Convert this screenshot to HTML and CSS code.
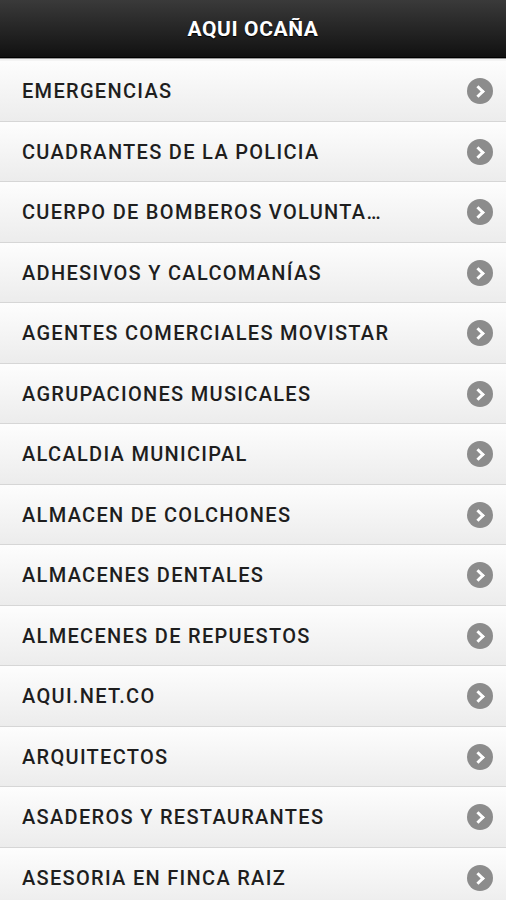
FILE: index.html
```html
<!DOCTYPE html>
<html lang="es">
<head>
  <meta charset="UTF-8" />
  <title>Aqui Ocaña</title>
  <link rel="stylesheet" href="styles.css">
</head>
<body>
  <header class="topbar">
    <h1>AQUI OCAÑA</h1>
  </header>

  <ul class="list">
    <li><a href="#"><span class="label">EMERGENCIAS</span><span class="arrow"></span></a></li>
    <li><a href="#"><span class="label">CUADRANTES DE LA POLICIA</span><span class="arrow"></span></a></li>
    <li><a href="#"><span class="label">CUERPO DE BOMBEROS VOLUNTARIOS</span><span class="arrow"></span></a></li>
    <li><a href="#"><span class="label">ADHESIVOS Y CALCOMANÍAS</span><span class="arrow"></span></a></li>
    <li><a href="#"><span class="label">AGENTES COMERCIALES MOVISTAR</span><span class="arrow"></span></a></li>
    <li><a href="#"><span class="label">AGRUPACIONES MUSICALES</span><span class="arrow"></span></a></li>
    <li><a href="#"><span class="label">ALCALDIA MUNICIPAL</span><span class="arrow"></span></a></li>
    <li><a href="#"><span class="label">ALMACEN DE COLCHONES</span><span class="arrow"></span></a></li>
    <li><a href="#"><span class="label">ALMACENES DENTALES</span><span class="arrow"></span></a></li>
    <li><a href="#"><span class="label">ALMECENES DE REPUESTOS</span><span class="arrow"></span></a></li>
    <li><a href="#"><span class="label">AQUI.NET.CO</span><span class="arrow"></span></a></li>
    <li><a href="#"><span class="label">ARQUITECTOS</span><span class="arrow"></span></a></li>
    <li><a href="#"><span class="label">ASADEROS Y RESTAURANTES</span><span class="arrow"></span></a></li>
    <li><a href="#"><span class="label">ASESORIA EN FINCA RAIZ</span><span class="arrow"></span></a></li>
  </ul>
</body>
</html>
```

FILE: styles.css
```css
body {
  margin: 0;
  background: #f4f4f4;
  font-family: Roboto, "Liberation Sans", Arial, sans-serif;
  overflow: hidden;
}

.topbar {
  height: 57px;
  background: linear-gradient(#3a3a3a, #111111);
  border-bottom: 1px solid #000;
  box-shadow: 0 1px 0 #9a9a9a;
  display: flex;
  align-items: center;
  justify-content: center;
}

.topbar h1 {
  margin: 0;
  color: #fff;
  font-size: 21px;
  font-weight: 700;
  letter-spacing: 0.6px;
  text-shadow: 0 1px 1px #000;
}

.list {
  list-style: none;
  margin: 0;
  padding: 0;
  margin-top: 3px;
}

.list li {
  border-bottom: 1px solid #d6d6d6;
  border-top: 1px solid #fdfdfd;
  background: linear-gradient(#fdfdfd, #ececec);
}

.list li a {
  display: flex;
  align-items: center;
  height: 58.5px;
  padding: 0 13px 0 22px;
  color: #1e1e1e;
  text-decoration: none;
}

.label {
  flex: 1;
  font-size: 20px;
  font-weight: 500;
  letter-spacing: 1.3px;
  white-space: nowrap;
  overflow: hidden;
  text-overflow: ellipsis;
  padding-right: 76px;
}

.arrow {
  width: 26px;
  height: 26px;
  border-radius: 50%;
  background: #8c8c8c;
  position: relative;
  flex: none;
}

.arrow::after {
  content: "";
  position: absolute;
  left: 7px;
  top: 9px;
  width: 6px;
  height: 6px;
  border-right: 3px solid #fff;
  border-top: 3px solid #fff;
  transform: rotate(45deg);
}
```
